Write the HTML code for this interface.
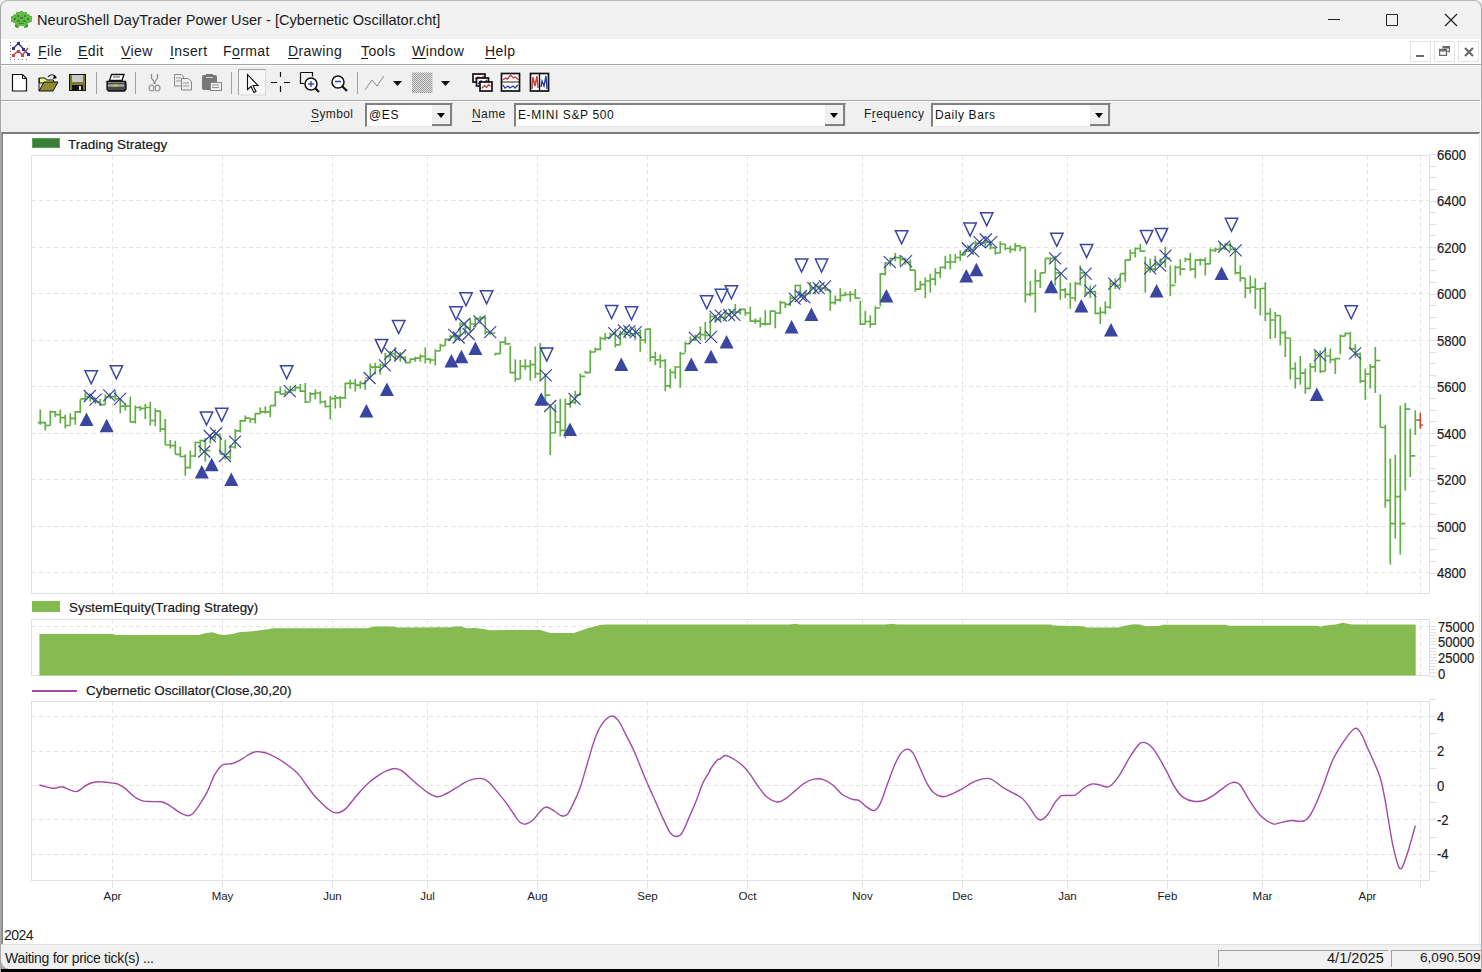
<!DOCTYPE html>
<html><head><meta charset="utf-8">
<style>
html,body{margin:0;padding:0;}
body{width:1482px;height:972px;overflow:hidden;position:relative;background:#fff;font-family:"Liberation Sans",sans-serif;color:#1a1a1a;}
.a{position:absolute;}
.t{position:absolute;white-space:pre;line-height:1;}
#title{left:0;top:0;width:1482px;height:39px;background:#f2f2f3;}
#menu{left:0;top:39px;width:1482px;height:25px;background:#fff;}
#tool{left:0;top:64px;width:1482px;height:37px;background:#f0f0f0;border-top:1px solid #a6a6a6;box-sizing:border-box;}
#sym{left:0;top:100px;width:1480px;height:34px;background:#f0f0f0;border-top:1px solid #a6a6a6;border-bottom:2px solid #7c7c7c;box-sizing:border-box;}
#status{left:0;top:945px;width:1482px;height:24px;background:#f0f0f0;}
#blk{left:0;top:969px;width:1482px;height:3px;background:#000;}
.mn{font-size:14px;top:44px;letter-spacing:0.4px;}
.mn u{text-decoration:none;background:linear-gradient(#1a1a1a,#1a1a1a) no-repeat 0 100%/100% 1px;}
.lbl{font-size:12px;top:108px;color:#222;}
.combo{position:absolute;top:103px;height:24px;background:#fff;box-sizing:border-box;border-top:2px solid #808080;border-left:2px solid #808080;border-right:1px solid #e8e8e8;border-bottom:1px solid #e8e8e8;}
.combo .btn{position:absolute;right:0;top:0;width:20px;height:21px;background:#f0f0f0;box-sizing:border-box;border-right:2px solid #808080;border-bottom:2px solid #808080;}
.combo .btn:after{content:"";position:absolute;left:5px;top:8px;border-left:4.5px solid transparent;border-right:4.5px solid transparent;border-top:5px solid #000;}
.combo .v{position:absolute;left:2px;top:3px;font-size:12px;color:#111;letter-spacing:0.6px;white-space:pre;}
.sep{position:absolute;top:72px;width:1px;height:22px;background:#a0a0a0;}
</style></head><body>
<div class="a" id="title"></div>
<div class="a" style="left:0;top:0;width:1482px;height:972px;box-sizing:border-box;border-left:1px solid #a8a8a8;border-right:1px solid #a8a8a8;border-top:1px solid #b8b8b8;border-top-left-radius:8px;border-top-right-radius:8px;pointer-events:none;z-index:5"></div>
<!-- app icon -->
<svg class="a" style="left:11px;top:11px" width="21" height="17" viewBox="0 0 21 17">
<path d="M9 0h3v1h4v2h2v1h1v1h2v6h-2v1h-2v2h-1v4h-3v-3h-5v3h-3v-4h-1v-2h-2v-1h-2v-6h2v-1h1v-1h2v-2h4z" fill="#64b845"/>
<path d="M6 4h2v2h-2zM13 4h2v2h-2zM3 7h2v2h-2zM9 6h3v2h-3zM16 7h2v2h-2zM6 9h3v2h-3zM12 9h3v2h-3zM8 12h5v1h-5zM4 14h2v2h-2zM15 14h2v2h-2z" fill="#3e8a2e"/>
</svg>
<div class="t" style="left:37px;top:13px;font-size:14.6px;color:#1a1a1a">NeuroShell DayTrader Power User - [Cybernetic Oscillator.cht]</div>
<!-- window buttons -->
<div class="a" style="left:1328px;top:19px;width:12px;height:1px;background:#222"></div>
<div class="a" style="left:1386px;top:14px;width:10px;height:10px;border:1px solid #222;border-radius:1px"></div>
<svg class="a" style="left:1444px;top:13px" width="14" height="14"><path d="M1 1L13 13M13 1L1 13" stroke="#222" stroke-width="1.2"/></svg>

<div class="a" id="menu"></div>
<!-- menu chart icon -->
<svg class="a" style="left:9px;top:40px" width="22" height="21" viewBox="0 0 22 21">
<g fill="#777"><rect x="1" y="2" width="1" height="1"/><rect x="1" y="5" width="1" height="1"/><rect x="1" y="8" width="1" height="1"/><rect x="1" y="11" width="1" height="1"/><rect x="1" y="14" width="1" height="1"/><rect x="1" y="17" width="1" height="1"/><rect x="1" y="19" width="1" height="1"/><rect x="5" y="19" width="1" height="1"/><rect x="9" y="19" width="1" height="1"/><rect x="13" y="19" width="1" height="1"/><rect x="17" y="19" width="1" height="1"/></g>
<g fill="#ccc"><rect x="5" y="1" width="1" height="1"/><rect x="9" y="1" width="1" height="1"/><rect x="13" y="1" width="1" height="1"/><rect x="17" y="1" width="1" height="1"/><rect x="20" y="5" width="1" height="1"/><rect x="20" y="9" width="1" height="1"/><rect x="20" y="13" width="1" height="1"/></g>
<path d="M4.5 8L9.5 3.5L14.5 9L19.5 14.5" stroke="#2a3490" stroke-width="1.5" fill="none"/>
<g fill="#2a3490"><rect x="3" y="7" width="3" height="3"/><rect x="8" y="2" width="3" height="3"/><rect x="13" y="8" width="3" height="3"/><rect x="18" y="13" width="3" height="3"/></g>
<path d="M4.5 15L9 11L13.5 15L19 8" stroke="#d04545" stroke-width="1.5" fill="none"/>
<g fill="#d04545"><rect x="3" y="14" width="3" height="3"/><rect x="8" y="10" width="3" height="3"/><rect x="12" y="14" width="3" height="3"/></g>
</svg>
<div class="t mn" style="left:38px"><u>F</u>ile</div>
<div class="t mn" style="left:78px"><u>E</u>dit</div>
<div class="t mn" style="left:121px"><u>V</u>iew</div>
<div class="t mn" style="left:170px"><u>I</u>nsert</div>
<div class="t mn" style="left:223px">F<u>o</u>rmat</div>
<div class="t mn" style="left:288px"><u>D</u>rawing</div>
<div class="t mn" style="left:361px"><u>T</u>ools</div>
<div class="t mn" style="left:412px"><u>W</u>indow</div>
<div class="t mn" style="left:485px"><u>H</u>elp</div>
<!-- MDI buttons -->
<div class="a" style="left:1410px;top:41px;width:21px;height:21px;box-sizing:border-box;border:1px solid #e4e4e4;background:#fff"></div>
<div class="a" style="left:1416px;top:55px;width:8px;height:2px;background:#6a6a6a"></div>
<div class="a" style="left:1434px;top:41px;width:21px;height:21px;box-sizing:border-box;border:1px solid #e4e4e4;background:#fff"></div>
<svg class="a" style="left:1439px;top:46px" width="11" height="10"><path d="M3.5 0.5h7v5h-2M0.5 3.5h7v6h-7z" stroke="#6a6a6a" fill="none" stroke-width="1.3"/><rect x="0.5" y="3.5" width="7" height="2" fill="#6a6a6a"/><rect x="3.5" y="0.5" width="7" height="2" fill="#6a6a6a"/></svg>
<div class="a" style="left:1458px;top:41px;width:21px;height:21px;box-sizing:border-box;border:1px solid #e4e4e4;background:#fff"></div>
<svg class="a" style="left:1464px;top:47px" width="10" height="10"><path d="M1 1L9 9M9 1L1 9" stroke="#6a6a6a" stroke-width="2.2"/></svg>

<div class="a" id="tool"><div style="position:absolute;left:0;top:0;width:100%;height:1px;background:#fff"></div></div>
<!-- toolbar icons -->
<svg class="a" style="left:0;top:64px" width="560" height="37" viewBox="0 64 560 37">
<!-- new -->
<path d="M12.5 74.5h10l4 4v12.5h-14z" fill="#fff" stroke="#111" stroke-width="1.2"/>
<path d="M22.5 74.5v4h4" fill="none" stroke="#111" stroke-width="1"/>
<!-- open -->
<path d="M39 78h6l1.5 2h7v3h-14z" fill="#f2f08a" stroke="#111" stroke-width="1"/>
<path d="M39 91l5-9h14l-5 9z" fill="#8c8c30" stroke="#111" stroke-width="1"/>
<path d="M39 78v13" stroke="#111"/>
<path d="M48 77c2-3 6-3 8 0" stroke="#111" stroke-width="1.2" fill="none"/><path d="M54 75l3 3-4 1z" fill="#111"/>
<!-- save -->
<rect x="69.5" y="74.5" width="16" height="16" fill="#7c7c28" stroke="#111"/>
<rect x="72" y="75" width="11" height="7" fill="#c8c8c8"/>
<rect x="72" y="85" width="11" height="6" fill="#111"/><rect x="79" y="86" width="2" height="4" fill="#ddd"/>
<!-- sep -->
<rect x="96" y="72" width="1" height="22" fill="#a0a0a0"/>
<!-- printer -->
<path d="M111.5 74.5h12.5l-2 6h-12.5z" fill="#fff" stroke="#111" stroke-width="1.3"/>
<path d="M113 77h7" stroke="#666" stroke-width="1.2"/>
<path d="M107 81.5h18.5l0.5 2v5.5l-1.5 2h-16l-1.5-2v-5.5z" fill="#4a4a4a" stroke="#111" stroke-width="1.3"/>
<rect x="108" y="84.5" width="16" height="2" fill="#b8b8b8"/><rect x="113" y="84.5" width="5" height="2" fill="#b8d040"/>
<path d="M108 82.5h16" stroke="#888"/>
<rect x="135" y="72" width="1" height="22" fill="#a0a0a0"/>
<!-- cut -->
<path d="M151.5 74v4l4 6M157.5 74v4l-4 6" stroke="#8a8a8a" stroke-width="1.2" fill="none"/>
<ellipse cx="151.5" cy="88" rx="2.4" ry="2.9" fill="none" stroke="#999" stroke-width="1.3"/><ellipse cx="157.5" cy="88" rx="2.4" ry="2.9" fill="none" stroke="#999" stroke-width="1.3"/>
<!-- copy -->
<path d="M174.5 74.5h7l2 2v9.5h-9z" fill="#eee" stroke="#888"/>
<path d="M181.5 78.5h7l3 3v8.5h-10z" fill="#eee" stroke="#888"/>
<path d="M176 78h5M176 81h5M183 83h6M183 86h6" stroke="#999"/>
<!-- paste -->
<rect x="202" y="75" width="15" height="15" rx="2" fill="#777"/>
<rect x="206" y="74" width="7" height="3" fill="#777"/><rect x="206" y="77" width="7" height="1" fill="#ccc"/>
<rect x="210.5" y="82.5" width="11" height="8" fill="#eee" stroke="#888"/>
<path d="M212 85h7M212 87.5h7" stroke="#999"/>
<rect x="231" y="72" width="1" height="22" fill="#a0a0a0"/>
<!-- pressed pointer button -->
<rect x="238.5" y="69.5" width="27" height="25.5" fill="#f7f7f7" stroke="#d8d8d8"/>
<path d="M238.5 95V69.5H266" stroke="#a0a0a0" fill="none"/>
<path d="M247.5 74.5v15l3.5-3 3 6 2-1-3-6h5z" fill="#fff" stroke="#111" stroke-width="1.1"/>
<!-- crosshair -->
<path d="M280.5 72v5M280.5 86v6M271 82.5h6M284 82.5h6" stroke="#111" stroke-width="1.2"/>
<!-- zoom in -->
<path d="M300.5 72.5h12v4M300.5 72.5v11h4" fill="none" stroke="#111" stroke-width="1.2"/>
<circle cx="311" cy="84" r="6" fill="#fff" stroke="#111" stroke-width="1.5"/>
<path d="M308 84h6M311 81v6" stroke="#3a46b0" stroke-width="1.4"/>
<path d="M315 88l4 4" stroke="#111" stroke-width="2.2"/>
<!-- zoom out -->
<circle cx="338" cy="82" r="6" fill="#fff" stroke="#111" stroke-width="1.5"/>
<path d="M335 81.5h6" stroke="#3a46b0" stroke-width="1.6"/>
<path d="M342 86l5 5" stroke="#111" stroke-width="2.2"/>
<rect x="357" y="72" width="1" height="22" fill="#a0a0a0"/>
<!-- line tool -->
<path d="M365 90l7-10 5 6 7-10" stroke="#8a8a8a" stroke-width="1" fill="none"/>
<path d="M393 81h9l-4.5 5z" fill="#111"/>
<defs><pattern id="chk" width="2" height="2" patternUnits="userSpaceOnUse" x="0" y="0"><rect width="2" height="2" fill="#e2e2e2"/><rect width="1" height="1" fill="#9a9a9a"/><rect x="1" y="1" width="1" height="1" fill="#9a9a9a"/></pattern></defs><rect x="412" y="72.5" width="20.5" height="20.5" fill="url(#chk)"/>
<path d="M441 81h9l-4.5 5z" fill="#111"/>
<!-- cascade -->
<rect x="473" y="74" width="12" height="8" fill="#fff" stroke="#111" stroke-width="1.7"/>
<path d="M475 79l3-2 3 1 3-2" stroke="#c84040" fill="none" stroke-width="1.2"/>
<rect x="476.5" y="78" width="12" height="8" fill="#fff" stroke="#111" stroke-width="1.7"/>
<path d="M478 84l3-3 3 2 3-3" stroke="#2a3aa0" fill="none" stroke-width="1.4"/>
<rect x="480" y="82" width="12" height="9" fill="#fff" stroke="#111" stroke-width="1.7"/>
<path d="M481.5 88.5l3-3 2 2 2-3 2 2" stroke="#c84040" fill="none" stroke-width="1.3"/>
<!-- tile h -->
<rect x="501.5" y="73.5" width="18" height="17.5" fill="#fff" stroke="#111" stroke-width="1.7"/>
<path d="M502 82h17" stroke="#444" stroke-width="1.2"/>
<path d="M502.5 80l3-2 2 1 3-4 3 3 2-1 3 3" stroke="#c84040" fill="none" stroke-width="1.4"/>
<path d="M503 85l2 3 3-2 2 2 3-2 2 2 3-3" stroke="#2a3aa0" fill="none" stroke-width="1.3"/>
<!-- tile v -->
<rect x="530.5" y="73.5" width="18" height="17.5" fill="#fff" stroke="#111" stroke-width="1.7"/>
<path d="M539.5 74v17" stroke="#111" stroke-width="1.4"/>
<path d="M532 89l1-12 2 9 2-10 1 12" stroke="#c84040" fill="none" stroke-width="1.4"/>
<path d="M541 87l1-6 2 5 2-10 1 13" stroke="#2a3aa0" fill="none" stroke-width="1.4"/>
</svg>

<div class="a" id="sym"><div style="position:absolute;left:0;top:0;width:100%;height:1px;background:#fff"></div></div>
<div class="t lbl" style="left:311px;letter-spacing:0.4px"><u style="text-decoration:none;border-bottom:1px solid #222">S</u>ymbol</div>
<div class="combo" style="left:365px;width:88px"><div class="v">@ES</div><div class="btn"></div></div>
<div class="t lbl" style="left:472px;letter-spacing:0.4px"><u style="text-decoration:none;border-bottom:1px solid #222">N</u>ame</div>
<div class="combo" style="left:514px;width:332px"><div class="v">E-MINI S&amp;P 500</div><div class="btn"></div></div>
<div class="t lbl" style="left:864px;letter-spacing:0.4px">F<u style="text-decoration:none;border-bottom:1px solid #222">r</u>equency</div>
<div class="combo" style="left:931px;width:180px"><div class="v">Daily Bars</div><div class="btn"></div></div>

<!-- chart area borders -->
<div class="a" style="left:2px;top:133px;width:1px;height:812px;background:#808080"></div>
<div class="a" style="left:1px;top:133px;width:1px;height:812px;background:#9c9c9c"></div>
<div class="a" style="left:1479px;top:133px;width:1px;height:812px;background:#ececec"></div>
<!-- legends -->
<div class="a" style="left:32px;top:138px;width:28px;height:10px;box-sizing:border-box;border:1px solid #52a848;background:#3d7d3b"></div>
<div class="t" style="left:68px;top:138px;font-size:13.5px;-webkit-text-stroke:0.2px #1a1a1a">Trading Strategy</div>
<div class="a" style="left:32px;top:601px;width:28px;height:11px;background:#84bb50"></div>
<div class="t" style="left:69px;top:601px;font-size:13.4px;-webkit-text-stroke:0.2px #1a1a1a">SystemEquity(Trading Strategy)</div>
<div class="a" style="left:32px;top:690px;width:45px;height:2px;background:#a04aa6"></div>
<div class="t" style="left:86px;top:684px;font-size:13.5px;-webkit-text-stroke:0.2px #1a1a1a">Cybernetic Oscillator(Close,30,20)</div>
<div class="t" style="left:4px;top:928px;font-size:14px;letter-spacing:-0.5px">2024</div>

<svg class="a" style="left:0;top:0" width="1482" height="972" font-family="Liberation Sans, sans-serif">
<rect x="31.5" y="155.5" width="1398.0" height="438.0" fill="none" stroke="#e0e0e0" stroke-width="1"/>
<line x1="31.5" y1="200.5" x2="1429.5" y2="200.5" stroke="#e3e3e3" stroke-dasharray="4 3.5"/>
<line x1="31.5" y1="247.5" x2="1429.5" y2="247.5" stroke="#e3e3e3" stroke-dasharray="4 3.5"/>
<line x1="31.5" y1="293.5" x2="1429.5" y2="293.5" stroke="#e3e3e3" stroke-dasharray="4 3.5"/>
<line x1="31.5" y1="340.5" x2="1429.5" y2="340.5" stroke="#e3e3e3" stroke-dasharray="4 3.5"/>
<line x1="31.5" y1="386.5" x2="1429.5" y2="386.5" stroke="#e3e3e3" stroke-dasharray="4 3.5"/>
<line x1="31.5" y1="433.5" x2="1429.5" y2="433.5" stroke="#e3e3e3" stroke-dasharray="4 3.5"/>
<line x1="31.5" y1="479.5" x2="1429.5" y2="479.5" stroke="#e3e3e3" stroke-dasharray="4 3.5"/>
<line x1="31.5" y1="526.5" x2="1429.5" y2="526.5" stroke="#e3e3e3" stroke-dasharray="4 3.5"/>
<line x1="31.5" y1="572.5" x2="1429.5" y2="572.5" stroke="#e3e3e3" stroke-dasharray="4 3.5"/>
<line x1="112.5" y1="155.5" x2="112.5" y2="593.5" stroke="#e3e3e3" stroke-dasharray="4 3.5"/>
<line x1="222.5" y1="155.5" x2="222.5" y2="593.5" stroke="#e3e3e3" stroke-dasharray="4 3.5"/>
<line x1="332.5" y1="155.5" x2="332.5" y2="593.5" stroke="#e3e3e3" stroke-dasharray="4 3.5"/>
<line x1="427.5" y1="155.5" x2="427.5" y2="593.5" stroke="#e3e3e3" stroke-dasharray="4 3.5"/>
<line x1="537.5" y1="155.5" x2="537.5" y2="593.5" stroke="#e3e3e3" stroke-dasharray="4 3.5"/>
<line x1="647.5" y1="155.5" x2="647.5" y2="593.5" stroke="#e3e3e3" stroke-dasharray="4 3.5"/>
<line x1="747.5" y1="155.5" x2="747.5" y2="593.5" stroke="#e3e3e3" stroke-dasharray="4 3.5"/>
<line x1="862.5" y1="155.5" x2="862.5" y2="593.5" stroke="#e3e3e3" stroke-dasharray="4 3.5"/>
<line x1="962.5" y1="155.5" x2="962.5" y2="593.5" stroke="#e3e3e3" stroke-dasharray="4 3.5"/>
<line x1="1067.5" y1="155.5" x2="1067.5" y2="593.5" stroke="#e3e3e3" stroke-dasharray="4 3.5"/>
<line x1="1167.5" y1="155.5" x2="1167.5" y2="593.5" stroke="#e3e3e3" stroke-dasharray="4 3.5"/>
<line x1="1262.5" y1="155.5" x2="1262.5" y2="593.5" stroke="#e3e3e3" stroke-dasharray="4 3.5"/>
<line x1="1367.5" y1="155.5" x2="1367.5" y2="593.5" stroke="#e3e3e3" stroke-dasharray="4 3.5"/>
<line x1="1420.5" y1="155.5" x2="1420.5" y2="593.5" stroke="#e3e3e3" stroke-dasharray="4 3.5"/>
<line x1="1429.5" y1="154.5" x2="1436.5" y2="154.5" stroke="#e0e0e0"/>
<line x1="1429.5" y1="166.5" x2="1436.5" y2="166.5" stroke="#e0e0e0"/>
<line x1="1429.5" y1="177.5" x2="1436.5" y2="177.5" stroke="#e0e0e0"/>
<line x1="1429.5" y1="189.5" x2="1436.5" y2="189.5" stroke="#e0e0e0"/>
<line x1="1429.5" y1="201.5" x2="1436.5" y2="201.5" stroke="#e0e0e0"/>
<line x1="1429.5" y1="212.5" x2="1436.5" y2="212.5" stroke="#e0e0e0"/>
<line x1="1429.5" y1="224.5" x2="1436.5" y2="224.5" stroke="#e0e0e0"/>
<line x1="1429.5" y1="235.5" x2="1436.5" y2="235.5" stroke="#e0e0e0"/>
<line x1="1429.5" y1="247.5" x2="1436.5" y2="247.5" stroke="#e0e0e0"/>
<line x1="1429.5" y1="259.5" x2="1436.5" y2="259.5" stroke="#e0e0e0"/>
<line x1="1429.5" y1="270.5" x2="1436.5" y2="270.5" stroke="#e0e0e0"/>
<line x1="1429.5" y1="282.5" x2="1436.5" y2="282.5" stroke="#e0e0e0"/>
<line x1="1429.5" y1="294.5" x2="1436.5" y2="294.5" stroke="#e0e0e0"/>
<line x1="1429.5" y1="305.5" x2="1436.5" y2="305.5" stroke="#e0e0e0"/>
<line x1="1429.5" y1="317.5" x2="1436.5" y2="317.5" stroke="#e0e0e0"/>
<line x1="1429.5" y1="328.5" x2="1436.5" y2="328.5" stroke="#e0e0e0"/>
<line x1="1429.5" y1="340.5" x2="1436.5" y2="340.5" stroke="#e0e0e0"/>
<line x1="1429.5" y1="352.5" x2="1436.5" y2="352.5" stroke="#e0e0e0"/>
<line x1="1429.5" y1="363.5" x2="1436.5" y2="363.5" stroke="#e0e0e0"/>
<line x1="1429.5" y1="375.5" x2="1436.5" y2="375.5" stroke="#e0e0e0"/>
<line x1="1429.5" y1="387.5" x2="1436.5" y2="387.5" stroke="#e0e0e0"/>
<line x1="1429.5" y1="398.5" x2="1436.5" y2="398.5" stroke="#e0e0e0"/>
<line x1="1429.5" y1="410.5" x2="1436.5" y2="410.5" stroke="#e0e0e0"/>
<line x1="1429.5" y1="421.5" x2="1436.5" y2="421.5" stroke="#e0e0e0"/>
<line x1="1429.5" y1="433.5" x2="1436.5" y2="433.5" stroke="#e0e0e0"/>
<line x1="1429.5" y1="445.5" x2="1436.5" y2="445.5" stroke="#e0e0e0"/>
<line x1="1429.5" y1="456.5" x2="1436.5" y2="456.5" stroke="#e0e0e0"/>
<line x1="1429.5" y1="468.5" x2="1436.5" y2="468.5" stroke="#e0e0e0"/>
<line x1="1429.5" y1="480.5" x2="1436.5" y2="480.5" stroke="#e0e0e0"/>
<line x1="1429.5" y1="491.5" x2="1436.5" y2="491.5" stroke="#e0e0e0"/>
<line x1="1429.5" y1="503.5" x2="1436.5" y2="503.5" stroke="#e0e0e0"/>
<line x1="1429.5" y1="514.5" x2="1436.5" y2="514.5" stroke="#e0e0e0"/>
<line x1="1429.5" y1="526.5" x2="1436.5" y2="526.5" stroke="#e0e0e0"/>
<line x1="1429.5" y1="538.5" x2="1436.5" y2="538.5" stroke="#e0e0e0"/>
<line x1="1429.5" y1="549.5" x2="1436.5" y2="549.5" stroke="#e0e0e0"/>
<line x1="1429.5" y1="561.5" x2="1436.5" y2="561.5" stroke="#e0e0e0"/>
<line x1="1429.5" y1="573.5" x2="1436.5" y2="573.5" stroke="#e0e0e0"/>
<path d="M40.3 409.7V424.8M37.8 422.7H40.3M40.3 422.7H42.8M45.3 421.9V430.6M42.8 422.7H45.3M45.3 425.5H47.8M50.3 410.4V425.5M47.8 425.5H50.3M50.3 411.9H52.8M55.3 411.1V416.9M52.8 411.9H55.3M55.3 414.7H57.8M60.3 409.7V423.4M57.8 414.7H60.3M60.3 417.6H62.8M65.3 414.7V428.4M62.8 417.6H65.3M65.3 425.5H67.8M70.3 413.3V424.8M67.8 425.5H70.3M70.3 418.3H72.8M75.3 411.1V424.8M72.8 418.3H75.3M75.3 411.9H77.8M80.3 399.6V413.3M77.8 411.9H80.3M80.3 398.9H82.8M85.3 392.4V400.3M82.8 398.9H85.3M85.3 396.7H87.8M90.3 394.6V401.8M87.8 396.7H90.3M90.3 398.2H92.8M95.3 398.2V403.9M92.8 398.2H95.3M95.3 401.8H97.8M100.3 398.9V406.1M97.8 401.8H100.3M100.3 404.6H102.8M105.3 394.6V404.6M102.8 404.6H105.3M105.3 396.7H107.8M110.3 393.1V398.9M107.8 396.7H110.3M110.3 396.7H112.8M115.3 390.2V399.6M112.8 396.7H115.3M115.3 398.9H117.8M120.3 398.2V413.3M117.8 398.9H120.3M120.3 406.1H122.8M125.3 403.2V410.4M122.8 406.1H125.3M125.3 406.1H127.8M130.3 396.7V422.7M127.8 406.1H130.3M130.3 421.9H132.8M135.3 405.4V423.4M132.8 421.9H135.3M135.3 407.5H137.8M140.3 406.1V411.1M137.8 407.5H140.3M140.3 408.3H142.8M145.3 403.9V419.1M142.8 408.3H145.3M145.3 407.5H147.8M150.3 401.8V425.5M147.8 407.5H150.3M150.3 420.5H152.8M155.3 408.3V426.3M152.8 420.5H155.3M155.3 411.1H157.8M160.3 410.4V432.0M157.8 411.1H160.3M160.3 429.1H162.8M165.3 419.1V445.0M162.8 429.1H165.3M165.3 445.0H167.8M170.3 439.9V448.6M167.8 445.0H170.3M170.3 445.7H172.8M175.3 440.7V454.3M172.8 445.7H175.3M175.3 454.3H177.8M180.3 446.4V457.2M177.8 454.3H180.3M180.3 456.5H182.8M185.3 454.2V475.8M182.8 456.5H185.3M185.3 467.7H187.8M190.3 450.6V468.6M187.8 467.7H190.3M190.3 456.0H192.8M195.3 441.6V456.9M192.8 456.0H195.3M195.3 442.5H197.8M200.3 439.8V452.4M197.8 442.5H200.3M200.3 440.7H202.8M205.3 438.0V461.4M202.8 440.7H205.3M205.3 450.6H207.8M210.3 434.4V443.4M207.8 450.6H210.3M210.3 437.1H212.8M215.3 432.6V439.8M212.8 437.1H215.3M215.3 434.4H217.8M220.3 434.4V454.2M217.8 434.4H220.3M220.3 454.2H222.8M225.3 439.8V459.6M222.8 454.2H225.3M225.3 456.9H227.8M230.3 445.2V459.6M227.8 456.9H230.3M230.3 447.0H232.8M235.3 429.0V448.8M232.8 447.0H235.3M235.3 430.8H237.8M240.3 420.0V432.6M237.8 430.8H240.3M240.3 420.9H242.8M245.3 415.5V421.8M242.8 420.9H245.3M245.3 418.2H247.8M250.3 418.2V422.7M247.8 418.2H250.3M250.3 419.1H252.8M255.3 412.8V423.6M252.8 419.1H255.3M255.3 413.7H257.8M260.3 407.4V413.7M257.8 413.7H260.3M260.3 411.9H262.8M265.3 406.5V413.7M262.8 411.9H265.3M265.3 411.9H267.8M270.3 405.6V417.3M267.8 411.9H270.3M270.3 405.6H272.8M275.3 391.2V406.5M272.8 405.6H275.3M275.3 392.1H277.8M280.3 386.7V394.8M277.8 392.1H280.3M280.3 393.9H282.8M285.3 389.4V395.7M282.8 393.9H285.3M285.3 392.1H287.8M290.3 385.8V393.0M287.8 392.1H290.3M290.3 390.3H292.8M295.3 385.8V391.2M292.8 390.3H295.3M295.3 387.6H297.8M300.3 384.0V392.1M297.8 387.6H300.3M300.3 391.2H302.8M305.3 383.1V402.9M302.8 391.2H305.3M305.3 402.0H307.8M310.3 392.1V401.1M307.8 402.0H310.3M310.3 393.9H312.8M315.3 389.4V399.3M312.8 393.9H315.3M315.3 393.0H317.8M320.3 391.2V403.8M317.8 393.0H320.3M320.3 402.0H322.8M325.3 400.2V407.4M322.8 402.0H325.3M325.3 406.5H327.8M330.3 396.0V419.4M327.8 406.5H330.3M330.3 398.7H332.8M335.3 395.1V408.6M332.8 398.7H335.3M335.3 397.8H337.8M340.3 396.0V407.7M337.8 397.8H340.3M340.3 397.8H342.8M345.3 382.5V398.7M342.8 397.8H345.3M345.3 383.4H347.8M350.3 379.8V388.8M347.8 383.4H350.3M350.3 383.4H352.8M355.3 378.9V391.5M352.8 383.4H355.3M355.3 385.2H357.8M360.3 380.7V388.8M357.8 385.2H360.3M360.3 383.4H362.8M365.3 379.8V389.7M362.8 383.4H365.3M365.3 378.0H367.8M370.3 363.6V378.0M367.8 378.0H370.3M370.3 367.2H372.8M375.3 362.7V374.4M372.8 367.2H375.3M375.3 367.2H377.8M380.3 363.6V374.4M377.8 367.2H380.3M380.3 365.4H382.8M385.3 352.8V367.2M382.8 365.4H385.3M385.3 356.4H387.8M390.3 351.0V360.0M387.8 356.4H390.3M390.3 353.7H392.8M395.3 347.4V360.0M392.8 353.7H395.3M395.3 356.4H397.8M400.3 351.9V361.8M397.8 356.4H400.3M400.3 357.3H402.8M405.3 356.4V362.7M402.8 357.3H405.3M405.3 362.7H407.8M410.3 358.2V362.7M407.8 362.7H410.3M410.3 359.1H412.8M415.3 356.4V361.8M412.8 359.1H415.3M415.3 358.2H417.8M420.3 354.6V361.8M417.8 358.2H420.3M420.3 356.4H422.8M425.3 347.4V363.6M422.8 356.4H425.3M425.3 359.1H427.8M430.3 358.2V363.6M427.8 359.1H430.3M430.3 360.0H432.8M435.3 349.2V365.4M432.8 360.0H435.3M435.3 351.0H437.8M440.3 343.8V351.0M437.8 351.0H440.3M440.3 345.6H442.8M445.3 338.4V345.6M442.8 345.6H445.3M445.3 339.3H447.8M450.3 334.8V341.1M447.8 339.3H450.3M450.3 336.6H452.8M455.3 333.9V341.1M452.8 336.6H455.3M455.3 335.7H457.8M460.3 322.2V336.6M457.8 335.7H460.3M460.3 324.0H462.8M465.3 322.2V334.8M462.8 324.0H465.3M465.3 327.6H467.8M470.3 318.6V332.1M467.8 327.6H470.3M470.3 324.0H472.8M475.3 316.8V327.6M472.8 324.0H475.3M475.3 318.6H477.8M480.3 315.9V324.0M477.8 318.6H480.3M480.3 317.7H482.8M485.3 316.8V334.8M482.8 317.7H485.3M485.3 332.1H487.8M490.3 331.2V334.8M487.8 332.1H490.3M490.3 333.0H492.8M495.3 352.8V355.5M492.8 333.0H495.3M495.3 353.7H497.8M500.3 341.2V353.8M497.8 353.7H500.3M500.3 342.1H502.8M505.3 336.7V344.8M502.8 342.1H505.3M505.3 343.9H507.8M510.3 345.7V373.6M507.8 343.9H510.3M510.3 372.7H512.8M515.3 359.2V381.7M512.8 372.7H515.3M515.3 379.0H517.8M520.3 360.1V379.0M517.8 379.0H520.3M520.3 366.4H522.8M525.3 359.2V370.0M522.8 366.4H525.3M525.3 366.4H527.8M530.3 360.1V380.8M527.8 366.4H530.3M530.3 364.6H532.8M535.3 346.6V378.1M532.8 364.6H535.3M535.3 373.6H537.8M540.3 343.0V380.8M537.8 373.6H540.3M540.3 348.4H542.8M545.3 373.6V404.2M542.8 348.4H545.3M545.3 395.2H547.8M550.3 404.2V455.0M547.8 395.2H550.3M550.3 433.0H552.8M555.3 404.2V433.0M552.8 433.0H555.3M555.3 422.2H557.8M560.3 398.8V436.6M557.8 422.2H560.3M560.3 430.3H562.8M565.3 398.8V438.4M562.8 430.3H565.3M565.3 404.2H567.8M570.3 395.2V407.8M567.8 404.2H570.3M570.3 402.4H572.8M575.3 390.7V404.2M572.8 402.4H575.3M575.3 395.2H577.8M580.3 373.6V395.2M577.8 395.2H580.3M580.3 376.3H582.8M585.3 370.9V373.6M582.8 376.3H585.3M585.3 372.7H587.8M590.3 350.2V372.7M587.8 372.7H590.3M590.3 352.0H592.8M595.3 347.5V352.0M592.8 352.0H595.3M595.3 349.3H597.8M600.3 336.7V350.2M597.8 349.3H600.3M600.3 338.5H602.8M605.3 333.1V340.3M602.8 338.5H605.3M605.3 337.6H607.8M610.3 333.1V338.5M607.8 337.6H610.3M610.3 334.0H612.8M615.3 328.6V347.5M612.8 334.0H615.3M615.3 344.8H617.8M620.3 330.4V344.8M617.8 344.8H620.3M620.3 334.0H622.8M625.3 325.9V338.5M622.8 334.0H625.3M625.3 332.2H627.8M630.3 327.7V335.8M627.8 332.2H630.3M630.3 334.0H632.8M635.3 327.4V340.0M632.8 334.0H635.3M635.3 332.8H637.8M640.3 329.2V351.7M637.8 332.8H640.3M640.3 340.0H642.8M645.3 329.2V343.6M642.8 340.0H645.3M645.3 329.2H647.8M650.3 328.3V361.6M647.8 329.2H650.3M650.3 357.1H652.8M655.3 351.7V365.2M652.8 357.1H655.3M655.3 359.8H657.8M660.3 354.4V367.9M657.8 359.8H660.3M660.3 360.7H662.8M665.3 358.9V391.3M662.8 360.7H665.3M665.3 385.9H667.8M670.3 368.8V388.6M667.8 385.9H670.3M670.3 372.4H672.8M675.3 366.1V378.7M672.8 372.4H675.3M675.3 367.0H677.8M680.3 351.7V387.7M677.8 367.0H680.3M680.3 353.5H682.8M685.3 341.8V352.6M682.8 353.5H685.3M685.3 343.6H687.8M690.3 336.4V341.8M687.8 343.6H690.3M690.3 340.0H692.8M695.3 334.6V340.9M692.8 340.0H695.3M695.3 337.3H697.8M700.3 326.5V340.0M697.8 337.3H700.3M700.3 334.6H702.8M705.3 322.0V340.0M702.8 334.6H705.3M705.3 335.5H707.8M710.3 313.0V338.2M707.8 335.5H710.3M710.3 316.6H712.8M715.3 314.8V322.9M712.8 316.6H715.3M715.3 319.3H717.8M720.3 314.8V321.1M717.8 319.3H720.3M720.3 317.5H722.8M725.3 311.2V318.4M722.8 317.5H725.3M725.3 313.9H727.8M730.3 309.4V317.5M727.8 313.9H730.3M730.3 312.1H732.8M735.3 304.0V314.8M732.8 312.1H735.3M735.3 312.1H737.8M740.3 308.5V314.8M737.8 312.1H740.3M740.3 309.4H742.8M745.3 308.5V315.7M742.8 309.4H745.3M745.3 313.0H747.8M750.3 306.7V322.0M747.8 313.0H750.3M750.3 321.1H752.8M755.3 318.4V323.8M752.8 321.1H755.3M755.3 321.1H757.8M760.3 317.5V327.4M757.8 321.1H760.3M760.3 323.8H762.8M765.3 310.3V325.6M762.8 323.8H765.3M765.3 323.8H767.8M770.3 310.3V324.7M767.8 323.8H770.3M770.3 311.2H772.8M775.3 311.2V328.3M772.8 311.2H775.3M775.3 313.0H777.8M780.3 300.8V314.3M777.8 313.0H780.3M780.3 302.6H782.8M785.3 302.6V308.0M782.8 302.6H785.3M785.3 304.4H787.8M790.3 295.4V306.2M787.8 304.4H790.3M790.3 298.1H792.8M795.3 284.6V298.1M792.8 298.1H795.3M795.3 285.5H797.8M800.3 284.6V298.1M797.8 285.5H800.3M800.3 295.4H802.8M805.3 290.9V298.1M802.8 295.4H805.3M805.3 293.6H807.8M810.3 281.9V294.5M807.8 293.6H810.3M810.3 288.2H812.8M815.3 283.7V294.5M812.8 288.2H815.3M815.3 286.4H817.8M820.3 284.6V291.8M817.8 286.4H820.3M820.3 288.2H822.8M825.3 286.4V290.9M822.8 288.2H825.3M825.3 290.0H827.8M830.3 290.0V310.7M827.8 290.0H830.3M830.3 302.6H832.8M835.3 295.4V304.4M832.8 302.6H835.3M835.3 299.9H837.8M840.3 288.2V301.7M837.8 299.9H840.3M840.3 295.4H842.8M845.3 291.8V296.3M842.8 295.4H845.3M845.3 294.5H847.8M850.3 290.9V301.7M847.8 294.5H850.3M850.3 294.5H852.8M855.3 289.1V299.0M852.8 294.5H855.3M855.3 298.1H857.8M860.3 300.8V325.1M857.8 298.1H860.3M860.3 324.2H862.8M865.3 310.7V324.2M862.8 324.2H865.3M865.3 321.5H867.8M870.3 315.2V327.8M867.8 321.5H870.3M870.3 324.2H872.8M875.3 306.2V325.1M872.8 324.2H875.3M875.3 308.0H877.8M880.3 272.9V306.2M877.8 308.0H880.3M880.3 273.8H882.8M885.3 262.1V275.6M882.8 273.8H885.3M885.3 263.0H887.8M890.3 257.6V266.6M887.8 263.0H890.3M890.3 258.5H892.8M895.3 253.1V261.2M892.8 258.5H895.3M895.3 257.6H897.8M900.3 254.9V265.7M897.8 257.6H900.3M900.3 259.4H902.8M905.3 257.6V264.8M902.8 259.4H905.3M905.3 262.1H907.8M910.3 259.4V271.1M907.8 262.1H910.3M910.3 270.2H912.8M915.3 270.2V291.8M912.8 270.2H915.3M915.3 289.1H917.8M920.3 281.0V290.0M917.8 289.1H920.3M920.3 284.6H922.8M925.3 277.4V298.1M922.8 284.6H925.3M925.3 281.0H927.8M930.3 273.7V292.6M927.8 281.0H930.3M930.3 279.1H932.8M935.3 268.3V285.4M932.8 279.1H935.3M935.3 272.8H937.8M940.3 266.5V278.2M937.8 272.8H940.3M940.3 267.4H942.8M945.3 255.7V269.2M942.8 267.4H945.3M945.3 262.0H947.8M950.3 253.9V269.2M947.8 262.0H950.3M950.3 262.0H952.8M955.3 253.9V262.9M952.8 262.0H955.3M955.3 257.5H957.8M960.3 250.3V261.1M957.8 257.5H960.3M960.3 254.8H962.8M965.3 249.4V254.8M962.8 254.8H965.3M965.3 251.2H967.8M970.3 245.8V252.1M967.8 251.2H970.3M970.3 249.4H972.8M975.3 240.4V249.4M972.8 249.4H975.3M975.3 243.1H977.8M980.3 240.4V245.8M977.8 243.1H980.3M980.3 243.1H982.8M985.3 238.6V246.7M982.8 243.1H985.3M985.3 242.2H987.8M990.3 242.2V249.4M987.8 242.2H990.3M990.3 247.6H992.8M995.3 247.6V254.8M992.8 247.6H995.3M995.3 253.0H997.8M1000.3 241.3V253.0M997.8 253.0H1000.3M1000.3 244.0H1002.8M1005.3 244.0V250.3M1002.8 244.0H1005.3M1005.3 248.5H1007.8M1010.3 245.8V253.0M1007.8 248.5H1010.3M1010.3 249.4H1012.8M1015.3 243.1V251.2M1012.8 249.4H1015.3M1015.3 245.8H1017.8M1020.3 245.8V251.2M1017.8 245.8H1020.3M1020.3 247.6H1022.8M1025.3 246.7V302.5M1022.8 247.6H1025.3M1025.3 294.4H1027.8M1030.3 280.9V296.2M1027.8 294.4H1030.3M1030.3 293.5H1032.8M1035.3 269.2V312.4M1032.8 293.5H1035.3M1035.3 280.9H1037.8M1040.3 272.8V288.1M1037.8 280.9H1040.3M1040.3 272.8H1042.8M1045.3 258.4V272.8M1042.8 272.8H1045.3M1045.3 258.4H1047.8M1050.3 257.5V263.8M1047.8 258.4H1050.3M1050.3 258.4H1052.8M1055.3 255.7V285.4M1052.8 258.4H1055.3M1055.3 272.8H1057.8M1060.3 272.8V299.8M1057.8 272.8H1060.3M1060.3 289.9H1062.8M1065.3 288.1V298.0M1062.8 289.9H1065.3M1065.3 294.4H1067.8M1070.3 282.7V308.8M1067.8 294.4H1070.3M1070.3 298.0H1072.8M1075.3 281.8V301.6M1072.8 298.0H1075.3M1075.3 283.6H1077.8M1080.3 265.6V285.4M1077.8 283.6H1080.3M1080.3 272.8H1082.8M1085.3 274.6V296.2M1082.8 272.8H1085.3M1085.3 292.6H1087.8M1090.3 285.4V298.0M1087.8 292.6H1090.3M1090.3 291.7H1092.8M1095.3 290.8V314.2M1092.8 291.7H1095.3M1095.3 313.3H1097.8M1100.3 307.0V324.1M1097.8 313.3H1100.3M1100.3 312.4H1102.8M1105.3 301.6V314.2M1102.8 312.4H1105.3M1105.3 307.0H1107.8M1110.3 280.0V308.8M1107.8 307.0H1110.3M1110.3 283.6H1112.8M1115.3 278.2V289.0M1112.8 283.6H1115.3M1115.3 285.4H1117.8M1120.3 273.7V288.1M1117.8 285.4H1120.3M1120.3 273.7H1122.8M1125.3 259.3V281.8M1122.8 273.7H1125.3M1125.3 260.2H1127.8M1130.3 249.4V260.2M1127.8 260.2H1130.3M1130.3 253.0H1132.8M1135.3 247.6V257.5M1132.8 253.0H1135.3M1135.3 248.5H1137.8M1140.3 244.0V252.1M1137.8 248.5H1140.3M1140.3 251.2H1142.8M1145.3 256.6V292.6M1142.8 251.2H1145.3M1145.3 268.3H1147.8M1150.3 258.4V272.8M1147.8 268.3H1150.3M1150.3 269.2H1152.8M1155.3 255.7V270.1M1152.8 269.2H1155.3M1155.3 264.7H1157.8M1160.3 258.4V265.6M1157.8 264.7H1160.3M1160.3 262.0H1162.8M1165.3 246.7V267.4M1162.8 262.0H1165.3M1165.3 258.4H1167.8M1170.3 265.6V296.2M1167.8 258.4H1170.3M1170.3 285.4H1172.8M1175.3 265.6V283.6M1172.8 285.4H1175.3M1175.3 267.4H1177.8M1180.3 259.3V275.5M1177.8 267.4H1180.3M1180.3 269.2H1182.8M1185.3 257.5V262.0M1182.8 269.2H1185.3M1185.3 259.3H1187.8M1190.3 253.0V271.0M1187.8 259.3H1190.3M1190.3 269.2H1192.8M1195.3 259.3V278.2M1192.8 269.2H1195.3M1195.3 260.2H1197.8M1200.3 258.4V265.6M1197.8 260.2H1200.3M1200.3 260.2H1202.8M1205.3 257.5V275.5M1202.8 260.2H1205.3M1205.3 263.8H1207.8M1210.3 248.5V263.8M1207.8 263.8H1210.3M1210.3 250.3H1212.8M1215.3 247.6V252.1M1212.8 250.3H1215.3M1215.3 249.4H1217.8M1220.3 242.2V250.3M1217.8 249.4H1220.3M1220.3 248.5H1222.8M1225.3 243.1V250.3M1222.8 248.5H1225.3M1225.3 244.9H1227.8M1230.3 242.2V251.2M1227.8 244.9H1230.3M1230.3 249.4H1232.8M1235.3 247.6V274.6M1232.8 249.4H1235.3M1235.3 272.8H1237.8M1240.3 265.6V281.8M1237.8 272.8H1240.3M1240.3 278.2H1242.8M1245.3 278.2V298.0M1242.8 278.2H1245.3M1245.3 288.1H1247.8M1250.3 275.5V293.5M1247.8 288.1H1250.3M1250.3 287.2H1252.8M1255.3 278.2V308.8M1252.8 287.2H1255.3M1255.3 289.0H1257.8M1260.3 288.5V315.5M1257.8 289.0H1260.3M1260.3 288.5H1262.8M1265.3 282.2V320.9M1262.8 288.5H1265.3M1265.3 313.7H1267.8M1270.3 308.3V338.9M1267.8 313.7H1270.3M1270.3 320.0H1272.8M1275.3 311.9V338.0M1272.8 320.0H1275.3M1275.3 315.5H1277.8M1280.3 315.5V345.2M1277.8 315.5H1280.3M1280.3 332.6H1282.8M1285.3 330.8V356.9M1282.8 332.6H1285.3M1285.3 338.0H1287.8M1290.3 338.0V379.4M1287.8 338.0H1290.3M1290.3 368.6H1292.8M1295.3 362.3V388.4M1292.8 368.6H1295.3M1295.3 378.5H1297.8M1300.3 356.0V384.8M1297.8 378.5H1300.3M1300.3 373.1H1302.8M1305.3 368.6V393.8M1302.8 373.1H1305.3M1305.3 388.4H1307.8M1310.3 363.2V388.4M1307.8 388.4H1310.3M1310.3 366.8H1312.8M1315.3 350.6V372.2M1312.8 366.8H1315.3M1315.3 355.1H1317.8M1320.3 350.6V373.1M1317.8 355.1H1320.3M1320.3 371.3H1322.8M1325.3 347.0V371.3M1322.8 371.3H1325.3M1325.3 356.0H1327.8M1330.3 348.8V363.2M1327.8 356.0H1330.3M1330.3 359.6H1332.8M1335.3 357.8V374.0M1332.8 359.6H1335.3M1335.3 358.7H1337.8M1340.3 334.4V354.2M1337.8 358.7H1340.3M1340.3 336.2H1342.8M1345.3 332.6V336.2M1342.8 336.2H1345.3M1345.3 333.5H1347.8M1350.3 331.7V348.8M1347.8 333.5H1350.3M1350.3 348.8H1352.8M1355.3 344.3V357.8M1352.8 348.8H1355.3M1355.3 354.2H1357.8M1360.3 352.4V383.0M1357.8 354.2H1360.3M1360.3 381.2H1362.8M1365.3 368.6V400.1M1362.8 381.2H1365.3M1365.3 374.0H1367.8M1370.3 364.1V388.4M1367.8 374.0H1370.3M1370.3 366.8H1372.8M1375.3 347.0V392.9M1372.8 366.8H1375.3M1375.3 360.5H1377.8M1380.3 394.3V427.5M1377.8 360.5H1380.3M1380.3 427.5H1382.8M1385.3 425.1V507.7M1382.8 427.5H1385.3M1385.3 500.3H1387.8M1390.3 458.4V564.4M1387.8 500.3H1390.3M1390.3 523.7H1392.8M1395.3 454.7V538.5M1392.8 523.7H1395.3M1395.3 496.6H1397.8M1400.3 405.4V554.5M1397.8 496.6H1400.3M1400.3 523.7H1402.8M1405.3 402.9V490.4M1402.8 523.7H1405.3M1405.3 409.1H1407.8M1410.3 428.8V476.9M1407.8 409.1H1410.3M1410.3 455.9H1412.8M1415.3 410.3V434.9M1412.8 455.9H1415.3M1415.3 420.1H1417.8" stroke="#62ad45" stroke-width="1.7" fill="none"/>
<path d="M1420.3 412.7V428.8M1417.8 420.1H1420.3M1420.3 425.1H1422.8" stroke="#d04a3a" stroke-width="1.7" fill="none"/>
<path d="M85.0 370.8H97.4L91.2 383.8Z" fill="none" stroke="#3a46a0" stroke-width="1.5" stroke-linejoin="miter"/>
<path d="M110.2 365.8H122.6L116.4 378.8Z" fill="none" stroke="#3a46a0" stroke-width="1.5" stroke-linejoin="miter"/>
<path d="M83.8 390.0L95.8 402.0M95.8 390.0L83.8 402.0" stroke="#3a46a0" stroke-width="1.2"/>
<path d="M89.5 393.6L101.5 405.6M101.5 393.6L89.5 405.6" stroke="#3a46a0" stroke-width="1.2"/>
<path d="M103.2 389.3L115.2 401.3M115.2 389.3L103.2 401.3" stroke="#3a46a0" stroke-width="1.2"/>
<path d="M114.0 392.9L126.0 404.9M126.0 392.9L114.0 404.9" stroke="#3a46a0" stroke-width="1.2"/>
<path d="M86.5 412.5L93.5 426.0H79.5Z" fill="#3a46a0"/>
<path d="M106.7 418.8L113.7 432.3H99.7Z" fill="#3a46a0"/>
<path d="M200.3 412.0H212.7L206.5 425.0Z" fill="none" stroke="#3a46a0" stroke-width="1.5" stroke-linejoin="miter"/>
<path d="M215.5 408.2H227.9L221.7 421.2Z" fill="none" stroke="#3a46a0" stroke-width="1.5" stroke-linejoin="miter"/>
<path d="M280.5 365.7H292.9L286.7 378.7Z" fill="none" stroke="#3a46a0" stroke-width="1.5" stroke-linejoin="miter"/>
<path d="M198.3 445.5L210.3 457.5M210.3 445.5L198.3 457.5" stroke="#3a46a0" stroke-width="1.2"/>
<path d="M203.7 430.0L215.7 442.0M215.7 430.0L203.7 442.0" stroke="#3a46a0" stroke-width="1.2"/>
<path d="M210.0 427.5L222.0 439.5M222.0 427.5L210.0 439.5" stroke="#3a46a0" stroke-width="1.2"/>
<path d="M219.0 450.0L231.0 462.0M231.0 450.0L219.0 462.0" stroke="#3a46a0" stroke-width="1.2"/>
<path d="M229.0 435.6L241.0 447.6M241.0 435.6L229.0 447.6" stroke="#3a46a0" stroke-width="1.2"/>
<path d="M283.8 385.2L295.8 397.2M295.8 385.2L283.8 397.2" stroke="#3a46a0" stroke-width="1.2"/>
<path d="M201.8 465.0L208.8 478.5H194.8Z" fill="#3a46a0"/>
<path d="M211.7 457.8L218.7 471.3H204.7Z" fill="#3a46a0"/>
<path d="M231.3 472.5L238.3 486.0H224.3Z" fill="#3a46a0"/>
<path d="M392.5 320.5H404.9L398.7 333.5Z" fill="none" stroke="#3a46a0" stroke-width="1.5" stroke-linejoin="miter"/>
<path d="M375.3 339.4H387.7L381.5 352.4Z" fill="none" stroke="#3a46a0" stroke-width="1.5" stroke-linejoin="miter"/>
<path d="M449.8 306.8H462.2L456.0 319.8Z" fill="none" stroke="#3a46a0" stroke-width="1.5" stroke-linejoin="miter"/>
<path d="M459.8 292.8H472.2L466.0 305.8Z" fill="none" stroke="#3a46a0" stroke-width="1.5" stroke-linejoin="miter"/>
<path d="M480.4 290.8H492.8L486.6 303.8Z" fill="none" stroke="#3a46a0" stroke-width="1.5" stroke-linejoin="miter"/>
<path d="M363.6 372.0L375.6 384.0M375.6 372.0L363.6 384.0" stroke="#3a46a0" stroke-width="1.2"/>
<path d="M378.9 359.4L390.9 371.4M390.9 359.4L378.9 371.4" stroke="#3a46a0" stroke-width="1.2"/>
<path d="M384.3 347.7L396.3 359.7M396.3 347.7L384.3 359.7" stroke="#3a46a0" stroke-width="1.2"/>
<path d="M394.2 349.5L406.2 361.5M406.2 349.5L394.2 361.5" stroke="#3a46a0" stroke-width="1.2"/>
<path d="M448.2 328.8L460.2 340.8M460.2 328.8L448.2 340.8" stroke="#3a46a0" stroke-width="1.2"/>
<path d="M452.7 331.5L464.7 343.5M464.7 331.5L452.7 343.5" stroke="#3a46a0" stroke-width="1.2"/>
<path d="M458.1 318.0L470.1 330.0M470.1 318.0L458.1 330.0" stroke="#3a46a0" stroke-width="1.2"/>
<path d="M462.6 328.0L474.6 340.0M474.6 328.0L462.6 340.0" stroke="#3a46a0" stroke-width="1.2"/>
<path d="M473.4 315.3L485.4 327.3M485.4 315.3L473.4 327.3" stroke="#3a46a0" stroke-width="1.2"/>
<path d="M484.2 326.1L496.2 338.1M496.2 326.1L484.2 338.1" stroke="#3a46a0" stroke-width="1.2"/>
<path d="M366.4 403.9L373.4 417.4H359.4Z" fill="#3a46a0"/>
<path d="M386.9 382.5L393.9 396.0H379.9Z" fill="#3a46a0"/>
<path d="M451.4 354.0L458.4 367.5H444.4Z" fill="#3a46a0"/>
<path d="M461.4 349.8L468.4 363.3H454.4Z" fill="#3a46a0"/>
<path d="M475.4 341.5L482.4 355.0H468.4Z" fill="#3a46a0"/>
<path d="M540.5 348.1H552.9L546.7 361.1Z" fill="none" stroke="#3a46a0" stroke-width="1.5" stroke-linejoin="miter"/>
<path d="M605.4 305.5H617.8L611.6 318.5Z" fill="none" stroke="#3a46a0" stroke-width="1.5" stroke-linejoin="miter"/>
<path d="M625.3 306.8H637.7L631.5 319.8Z" fill="none" stroke="#3a46a0" stroke-width="1.5" stroke-linejoin="miter"/>
<path d="M539.7 369.4L551.7 381.4M551.7 369.4L539.7 381.4" stroke="#3a46a0" stroke-width="1.2"/>
<path d="M544.2 400.0L556.2 412.0M556.2 400.0L544.2 412.0" stroke="#3a46a0" stroke-width="1.2"/>
<path d="M568.5 392.8L580.5 404.8M580.5 392.8L568.5 404.8" stroke="#3a46a0" stroke-width="1.2"/>
<path d="M608.1 327.1L620.1 339.1M620.1 327.1L608.1 339.1" stroke="#3a46a0" stroke-width="1.2"/>
<path d="M618.0 324.4L630.0 336.4M630.0 324.4L618.0 336.4" stroke="#3a46a0" stroke-width="1.2"/>
<path d="M623.4 325.3L635.4 337.3M635.4 325.3L623.4 337.3" stroke="#3a46a0" stroke-width="1.2"/>
<path d="M629.7 326.2L641.7 338.2M641.7 326.2L629.7 338.2" stroke="#3a46a0" stroke-width="1.2"/>
<path d="M541.3 392.2L548.3 405.7H534.3Z" fill="#3a46a0"/>
<path d="M570.0 422.5L577.0 436.0H563.0Z" fill="#3a46a0"/>
<path d="M621.3 357.5L628.3 371.0H614.3Z" fill="#3a46a0"/>
<path d="M700.5 295.8H712.9L706.7 308.8Z" fill="none" stroke="#3a46a0" stroke-width="1.5" stroke-linejoin="miter"/>
<path d="M715.3 289.3H727.7L721.5 302.3Z" fill="none" stroke="#3a46a0" stroke-width="1.5" stroke-linejoin="miter"/>
<path d="M725.2 285.8H737.6L731.4 298.8Z" fill="none" stroke="#3a46a0" stroke-width="1.5" stroke-linejoin="miter"/>
<path d="M688.8 331.9L700.8 343.9M700.8 331.9L688.8 343.9" stroke="#3a46a0" stroke-width="1.2"/>
<path d="M705.0 330.8L717.0 342.8M717.0 330.8L705.0 342.8" stroke="#3a46a0" stroke-width="1.2"/>
<path d="M709.5 310.6L721.5 322.6M721.5 310.6L709.5 322.6" stroke="#3a46a0" stroke-width="1.2"/>
<path d="M714.9 309.7L726.9 321.7M726.9 309.7L714.9 321.7" stroke="#3a46a0" stroke-width="1.2"/>
<path d="M723.0 308.8L735.0 320.8M735.0 308.8L723.0 320.8" stroke="#3a46a0" stroke-width="1.2"/>
<path d="M728.4 308.8L740.4 320.8M740.4 308.8L728.4 320.8" stroke="#3a46a0" stroke-width="1.2"/>
<path d="M788.7 292.6L800.7 304.6M800.7 292.6L788.7 304.6" stroke="#3a46a0" stroke-width="1.2"/>
<path d="M795.0 290.0L807.0 302.0M807.0 290.0L795.0 302.0" stroke="#3a46a0" stroke-width="1.2"/>
<path d="M691.3 357.5L698.3 371.0H684.3Z" fill="#3a46a0"/>
<path d="M711.0 349.7L718.0 363.2H704.0Z" fill="#3a46a0"/>
<path d="M726.6 335.0L733.6 348.5H719.6Z" fill="#3a46a0"/>
<path d="M791.6 320.0L798.6 333.5H784.6Z" fill="#3a46a0"/>
<path d="M795.4 259.1H807.8L801.6 272.1Z" fill="none" stroke="#3a46a0" stroke-width="1.5" stroke-linejoin="miter"/>
<path d="M815.4 259.1H827.8L821.6 272.1Z" fill="none" stroke="#3a46a0" stroke-width="1.5" stroke-linejoin="miter"/>
<path d="M895.4 230.8H907.8L901.6 243.8Z" fill="none" stroke="#3a46a0" stroke-width="1.5" stroke-linejoin="miter"/>
<path d="M798.3 291.2L810.3 303.2M810.3 291.2L798.3 303.2" stroke="#3a46a0" stroke-width="1.2"/>
<path d="M807.3 282.2L819.3 294.2M819.3 282.2L807.3 294.2" stroke="#3a46a0" stroke-width="1.2"/>
<path d="M812.7 282.2L824.7 294.2M824.7 282.2L812.7 294.2" stroke="#3a46a0" stroke-width="1.2"/>
<path d="M819.0 280.4L831.0 292.4M831.0 280.4L819.0 292.4" stroke="#3a46a0" stroke-width="1.2"/>
<path d="M883.8 256.1L895.8 268.1M895.8 256.1L883.8 268.1" stroke="#3a46a0" stroke-width="1.2"/>
<path d="M900.0 255.2L912.0 267.2M912.0 255.2L900.0 267.2" stroke="#3a46a0" stroke-width="1.2"/>
<path d="M811.4 307.5L818.4 321.0H804.4Z" fill="#3a46a0"/>
<path d="M886.4 289.0L893.4 302.5H879.4Z" fill="#3a46a0"/>
<path d="M963.9 223.0H976.3L970.1 236.0Z" fill="none" stroke="#3a46a0" stroke-width="1.5" stroke-linejoin="miter"/>
<path d="M980.5 212.8H992.9L986.7 225.8Z" fill="none" stroke="#3a46a0" stroke-width="1.5" stroke-linejoin="miter"/>
<path d="M1050.6 233.3H1063.0L1056.8 246.3Z" fill="none" stroke="#3a46a0" stroke-width="1.5" stroke-linejoin="miter"/>
<path d="M1080.4 244.6H1092.8L1086.6 257.6Z" fill="none" stroke="#3a46a0" stroke-width="1.5" stroke-linejoin="miter"/>
<path d="M961.8 242.5L973.8 254.5M973.8 242.5L961.8 254.5" stroke="#3a46a0" stroke-width="1.2"/>
<path d="M967.2 245.2L979.2 257.2M979.2 245.2L967.2 257.2" stroke="#3a46a0" stroke-width="1.2"/>
<path d="M973.5 236.2L985.5 248.2M985.5 236.2L973.5 248.2" stroke="#3a46a0" stroke-width="1.2"/>
<path d="M979.8 233.5L991.8 245.5M991.8 233.5L979.8 245.5" stroke="#3a46a0" stroke-width="1.2"/>
<path d="M985.2 236.2L997.2 248.2M997.2 236.2L985.2 248.2" stroke="#3a46a0" stroke-width="1.2"/>
<path d="M1049.1 252.4L1061.1 264.4M1061.1 252.4L1049.1 264.4" stroke="#3a46a0" stroke-width="1.2"/>
<path d="M1055.1 267.7L1067.1 279.7M1067.1 267.7L1055.1 279.7" stroke="#3a46a0" stroke-width="1.2"/>
<path d="M1079.7 267.7L1091.7 279.7M1091.7 267.7L1079.7 279.7" stroke="#3a46a0" stroke-width="1.2"/>
<path d="M1084.2 284.8L1096.2 296.8M1096.2 284.8L1084.2 296.8" stroke="#3a46a0" stroke-width="1.2"/>
<path d="M966.3 269.0L973.3 282.5H959.3Z" fill="#3a46a0"/>
<path d="M976.4 262.7L983.4 276.2H969.4Z" fill="#3a46a0"/>
<path d="M1051.2 279.8L1058.2 293.3H1044.2Z" fill="#3a46a0"/>
<path d="M1081.3 299.0L1088.3 312.5H1074.3Z" fill="#3a46a0"/>
<path d="M1140.4 230.6H1152.8L1146.6 243.6Z" fill="none" stroke="#3a46a0" stroke-width="1.5" stroke-linejoin="miter"/>
<path d="M1155.2 228.4H1167.6L1161.4 241.4Z" fill="none" stroke="#3a46a0" stroke-width="1.5" stroke-linejoin="miter"/>
<path d="M1225.3 218.3H1237.7L1231.5 231.3Z" fill="none" stroke="#3a46a0" stroke-width="1.5" stroke-linejoin="miter"/>
<path d="M1108.2 277.6L1120.2 289.6M1120.2 277.6L1108.2 289.6" stroke="#3a46a0" stroke-width="1.2"/>
<path d="M1144.2 262.3L1156.2 274.3M1156.2 262.3L1144.2 274.3" stroke="#3a46a0" stroke-width="1.2"/>
<path d="M1154.1 259.6L1166.1 271.6M1166.1 259.6L1154.1 271.6" stroke="#3a46a0" stroke-width="1.2"/>
<path d="M1159.5 249.7L1171.5 261.7M1171.5 249.7L1159.5 261.7" stroke="#3a46a0" stroke-width="1.2"/>
<path d="M1218.0 240.7L1230.0 252.7M1230.0 240.7L1218.0 252.7" stroke="#3a46a0" stroke-width="1.2"/>
<path d="M1229.7 244.3L1241.7 256.3M1241.7 244.3L1229.7 256.3" stroke="#3a46a0" stroke-width="1.2"/>
<path d="M1111.0 323.0L1118.0 336.5H1104.0Z" fill="#3a46a0"/>
<path d="M1156.6 284.0L1163.6 297.5H1149.6Z" fill="#3a46a0"/>
<path d="M1221.6 266.5L1228.6 280.0H1214.6Z" fill="#3a46a0"/>
<path d="M1345.0 305.8H1357.4L1351.2 318.8Z" fill="none" stroke="#3a46a0" stroke-width="1.5" stroke-linejoin="miter"/>
<path d="M1314.0 349.1L1326.0 361.1M1326.0 349.1L1314.0 361.1" stroke="#3a46a0" stroke-width="1.2"/>
<path d="M1349.1 347.3L1361.1 359.3M1361.1 347.3L1349.1 359.3" stroke="#3a46a0" stroke-width="1.2"/>
<path d="M1316.8 387.5L1323.8 401.0H1309.8Z" fill="#3a46a0"/>
<rect x="31.5" y="619.5" width="1398.0" height="56.0" fill="none" stroke="#e0e0e0" stroke-width="1"/>
<line x1="31.5" y1="626.5" x2="1429.5" y2="626.5" stroke="#e3e3e3" stroke-dasharray="4 3.5"/>
<line x1="112.5" y1="619.5" x2="112.5" y2="675.5" stroke="#e3e3e3" stroke-dasharray="4 3.5"/>
<line x1="222.5" y1="619.5" x2="222.5" y2="675.5" stroke="#e3e3e3" stroke-dasharray="4 3.5"/>
<line x1="332.5" y1="619.5" x2="332.5" y2="675.5" stroke="#e3e3e3" stroke-dasharray="4 3.5"/>
<line x1="427.5" y1="619.5" x2="427.5" y2="675.5" stroke="#e3e3e3" stroke-dasharray="4 3.5"/>
<line x1="537.5" y1="619.5" x2="537.5" y2="675.5" stroke="#e3e3e3" stroke-dasharray="4 3.5"/>
<line x1="647.5" y1="619.5" x2="647.5" y2="675.5" stroke="#e3e3e3" stroke-dasharray="4 3.5"/>
<line x1="747.5" y1="619.5" x2="747.5" y2="675.5" stroke="#e3e3e3" stroke-dasharray="4 3.5"/>
<line x1="862.5" y1="619.5" x2="862.5" y2="675.5" stroke="#e3e3e3" stroke-dasharray="4 3.5"/>
<line x1="962.5" y1="619.5" x2="962.5" y2="675.5" stroke="#e3e3e3" stroke-dasharray="4 3.5"/>
<line x1="1067.5" y1="619.5" x2="1067.5" y2="675.5" stroke="#e3e3e3" stroke-dasharray="4 3.5"/>
<line x1="1167.5" y1="619.5" x2="1167.5" y2="675.5" stroke="#e3e3e3" stroke-dasharray="4 3.5"/>
<line x1="1262.5" y1="619.5" x2="1262.5" y2="675.5" stroke="#e3e3e3" stroke-dasharray="4 3.5"/>
<line x1="1367.5" y1="619.5" x2="1367.5" y2="675.5" stroke="#e3e3e3" stroke-dasharray="4 3.5"/>
<line x1="1420.5" y1="619.5" x2="1420.5" y2="675.5" stroke="#e3e3e3" stroke-dasharray="4 3.5"/>
<line x1="1429.5" y1="676.5" x2="1436.5" y2="676.5" stroke="#e0e0e0"/>
<line x1="1429.5" y1="672.5" x2="1436.5" y2="672.5" stroke="#e0e0e0"/>
<line x1="1429.5" y1="669.5" x2="1436.5" y2="669.5" stroke="#e0e0e0"/>
<line x1="1429.5" y1="666.5" x2="1436.5" y2="666.5" stroke="#e0e0e0"/>
<line x1="1429.5" y1="663.5" x2="1436.5" y2="663.5" stroke="#e0e0e0"/>
<line x1="1429.5" y1="660.5" x2="1436.5" y2="660.5" stroke="#e0e0e0"/>
<line x1="1429.5" y1="657.5" x2="1436.5" y2="657.5" stroke="#e0e0e0"/>
<line x1="1429.5" y1="654.5" x2="1436.5" y2="654.5" stroke="#e0e0e0"/>
<line x1="1429.5" y1="651.5" x2="1436.5" y2="651.5" stroke="#e0e0e0"/>
<line x1="1429.5" y1="648.5" x2="1436.5" y2="648.5" stroke="#e0e0e0"/>
<line x1="1429.5" y1="644.5" x2="1436.5" y2="644.5" stroke="#e0e0e0"/>
<line x1="1429.5" y1="641.5" x2="1436.5" y2="641.5" stroke="#e0e0e0"/>
<line x1="1429.5" y1="638.5" x2="1436.5" y2="638.5" stroke="#e0e0e0"/>
<line x1="1429.5" y1="635.5" x2="1436.5" y2="635.5" stroke="#e0e0e0"/>
<line x1="1429.5" y1="632.5" x2="1436.5" y2="632.5" stroke="#e0e0e0"/>
<line x1="1429.5" y1="629.5" x2="1436.5" y2="629.5" stroke="#e0e0e0"/>
<line x1="1429.5" y1="626.5" x2="1436.5" y2="626.5" stroke="#e0e0e0"/>
<path d="M39.4 675.5L39.4 633.9L112.7 633.9L116.0 635.0L198.7 635.0L205.4 633.3L212.2 632.2L218.9 634.3L224.0 635.0L232.4 633.9L239.2 632.2L252.7 631.2L266.2 629.5L272.9 628.2L367.4 628.2L374.1 626.5L392.7 626.5L397.7 627.5L451.7 627.2L456.8 626.2L461.8 626.8L466.9 628.2L475.3 627.9L483.8 628.9L488.8 630.2L520.0 629.9L540.2 629.9L550.4 632.9L574.0 632.9L587.5 628.2L601.0 624.8L607.7 624.5L789.9 624.5L795.0 623.8L800.0 624.5L886.0 624.5L891.1 623.8L897.9 624.5L1050.5 624.5L1053.4 625.4L1083.1 626.3L1086.1 627.4L1118.8 627.4L1124.7 625.7L1133.6 624.2L1139.5 624.5L1145.5 626.3L1160.3 625.7L1163.3 624.8L1225.7 624.8L1228.6 625.7L1317.7 625.7L1320.7 626.8L1323.6 625.7L1335.5 624.5L1342.9 622.7L1348.9 623.9L1353.3 624.5L1415.7 624.5L1415.7 675.5Z" fill="#85bb50"/>
<rect x="31.5" y="701.5" width="1398.0" height="179.0" fill="none" stroke="#e0e0e0" stroke-width="1"/>
<line x1="31.5" y1="716.5" x2="1429.5" y2="716.5" stroke="#e3e3e3" stroke-dasharray="4 3.5"/>
<line x1="31.5" y1="751.5" x2="1429.5" y2="751.5" stroke="#e3e3e3" stroke-dasharray="4 3.5"/>
<line x1="31.5" y1="785.5" x2="1429.5" y2="785.5" stroke="#e3e3e3" stroke-dasharray="4 3.5"/>
<line x1="31.5" y1="819.5" x2="1429.5" y2="819.5" stroke="#e3e3e3" stroke-dasharray="4 3.5"/>
<line x1="31.5" y1="854.5" x2="1429.5" y2="854.5" stroke="#e3e3e3" stroke-dasharray="4 3.5"/>
<line x1="112.5" y1="701.5" x2="112.5" y2="880.5" stroke="#e3e3e3" stroke-dasharray="4 3.5"/>
<line x1="222.5" y1="701.5" x2="222.5" y2="880.5" stroke="#e3e3e3" stroke-dasharray="4 3.5"/>
<line x1="332.5" y1="701.5" x2="332.5" y2="880.5" stroke="#e3e3e3" stroke-dasharray="4 3.5"/>
<line x1="427.5" y1="701.5" x2="427.5" y2="880.5" stroke="#e3e3e3" stroke-dasharray="4 3.5"/>
<line x1="537.5" y1="701.5" x2="537.5" y2="880.5" stroke="#e3e3e3" stroke-dasharray="4 3.5"/>
<line x1="647.5" y1="701.5" x2="647.5" y2="880.5" stroke="#e3e3e3" stroke-dasharray="4 3.5"/>
<line x1="747.5" y1="701.5" x2="747.5" y2="880.5" stroke="#e3e3e3" stroke-dasharray="4 3.5"/>
<line x1="862.5" y1="701.5" x2="862.5" y2="880.5" stroke="#e3e3e3" stroke-dasharray="4 3.5"/>
<line x1="962.5" y1="701.5" x2="962.5" y2="880.5" stroke="#e3e3e3" stroke-dasharray="4 3.5"/>
<line x1="1067.5" y1="701.5" x2="1067.5" y2="880.5" stroke="#e3e3e3" stroke-dasharray="4 3.5"/>
<line x1="1167.5" y1="701.5" x2="1167.5" y2="880.5" stroke="#e3e3e3" stroke-dasharray="4 3.5"/>
<line x1="1262.5" y1="701.5" x2="1262.5" y2="880.5" stroke="#e3e3e3" stroke-dasharray="4 3.5"/>
<line x1="1367.5" y1="701.5" x2="1367.5" y2="880.5" stroke="#e3e3e3" stroke-dasharray="4 3.5"/>
<line x1="1420.5" y1="701.5" x2="1420.5" y2="880.5" stroke="#e3e3e3" stroke-dasharray="4 3.5"/>
<line x1="1429.5" y1="871.5" x2="1436.5" y2="871.5" stroke="#e0e0e0"/>
<line x1="1429.5" y1="854.5" x2="1436.5" y2="854.5" stroke="#e0e0e0"/>
<line x1="1429.5" y1="837.5" x2="1436.5" y2="837.5" stroke="#e0e0e0"/>
<line x1="1429.5" y1="819.5" x2="1436.5" y2="819.5" stroke="#e0e0e0"/>
<line x1="1429.5" y1="802.5" x2="1436.5" y2="802.5" stroke="#e0e0e0"/>
<line x1="1429.5" y1="785.5" x2="1436.5" y2="785.5" stroke="#e0e0e0"/>
<line x1="1429.5" y1="768.5" x2="1436.5" y2="768.5" stroke="#e0e0e0"/>
<line x1="1429.5" y1="751.5" x2="1436.5" y2="751.5" stroke="#e0e0e0"/>
<line x1="1429.5" y1="733.5" x2="1436.5" y2="733.5" stroke="#e0e0e0"/>
<line x1="1429.5" y1="716.5" x2="1436.5" y2="716.5" stroke="#e0e0e0"/>
<line x1="1429.5" y1="699.5" x2="1436.5" y2="699.5" stroke="#e0e0e0"/>
<path d="M39.4 785.0C40.2 785.2 42.2 785.7 44.2 786.2C46.1 786.7 49.3 787.8 51.3 788.1C53.2 788.4 54.4 788.3 56.0 788.1C57.6 787.9 59.1 786.7 60.7 786.7C62.3 786.6 63.9 787.3 65.4 787.9C67.0 788.5 68.4 789.6 70.2 790.2C71.9 790.9 74.3 791.8 76.1 791.6C77.8 791.5 79.0 790.4 80.8 789.3C82.6 788.2 84.3 786.2 86.7 785.0C89.0 783.8 92.2 782.5 95.0 782.0C97.7 781.4 100.3 781.8 103.2 782.0C106.2 782.2 110.3 782.8 112.7 783.1C115.0 783.5 115.4 783.1 117.4 783.8C119.4 784.6 122.1 786.1 124.5 787.9C126.8 789.6 129.6 792.8 131.6 794.5C133.5 796.2 134.3 796.9 136.3 798.0C138.3 799.1 140.6 800.5 143.4 801.1C146.1 801.7 149.9 801.4 152.8 801.6C155.8 801.7 158.7 801.4 161.1 801.8C163.4 802.2 164.8 802.8 167.0 803.9C169.2 805.1 171.7 807.1 174.1 808.6C176.4 810.2 178.8 812.2 181.2 813.4C183.5 814.5 186.3 815.7 188.2 815.7C190.2 815.7 191.0 815.3 193.0 813.4C194.9 811.4 197.7 807.5 200.1 803.9C202.4 800.4 204.8 796.8 207.1 792.1C209.5 787.4 211.9 780.0 214.2 775.6C216.6 771.2 219.3 767.5 221.3 765.7C223.3 763.8 224.1 764.6 226.0 764.2C228.0 763.8 230.8 764.0 233.1 763.3C235.5 762.6 237.8 761.5 240.2 760.2C242.6 758.9 244.9 756.9 247.3 755.5C249.7 754.1 252.0 752.6 254.4 752.0C256.7 751.4 259.1 751.6 261.5 752.0C263.8 752.3 265.8 752.7 268.5 753.8C271.3 755.0 275.2 757.0 278.0 758.6C280.7 760.1 282.7 761.6 285.1 763.3C287.4 765.0 289.8 766.5 292.2 768.5C294.5 770.5 296.9 772.4 299.2 775.1C301.6 777.9 304.0 781.8 306.3 785.0C308.7 788.3 311.1 791.6 313.4 794.5C315.8 797.3 318.1 799.7 320.5 802.0C322.9 804.4 325.0 806.8 327.6 808.6C330.1 810.5 332.9 812.8 335.9 812.9C338.8 813.0 342.4 811.4 345.3 809.1C348.3 806.8 351.0 802.2 353.6 799.2C356.1 796.2 357.9 793.9 360.7 790.9C363.4 788.0 366.9 784.2 370.1 781.5C373.3 778.7 377.3 776.2 380.0 774.4C382.8 772.6 384.1 771.8 386.5 770.9C389.0 769.9 392.2 768.5 394.8 768.5C397.4 768.5 399.3 769.3 401.9 770.9C404.4 772.4 407.2 775.4 410.2 777.9C413.1 780.5 416.4 783.6 419.6 786.2C422.7 788.8 426.1 791.5 429.0 793.3C432.0 795.1 434.6 796.7 437.3 796.8C440.1 797.0 442.6 795.4 445.6 794.0C448.5 792.6 451.9 790.5 455.0 788.6C458.2 786.7 461.7 784.2 464.5 782.7C467.2 781.2 468.8 780.3 471.6 779.6C474.3 778.9 478.3 778.1 481.0 778.4C483.8 778.7 485.3 779.2 488.1 781.5C490.8 783.8 494.4 788.4 497.5 792.1C500.7 795.9 504.2 800.2 507.0 803.9C509.7 807.7 511.9 811.5 514.1 814.5C516.2 817.6 518.0 820.8 520.0 822.3C521.9 823.9 523.7 824.4 525.9 824.0C528.0 823.6 530.6 822.1 533.0 820.0C535.3 817.9 537.9 813.6 540.1 811.5C542.2 809.3 543.6 807.1 546.0 807.0C548.3 806.9 551.7 809.5 554.2 811.0C556.8 812.5 559.1 815.1 561.3 815.7C563.5 816.3 565.2 816.5 567.2 814.5C569.2 812.6 571.0 808.4 573.1 803.9C575.3 799.4 577.8 794.1 580.2 787.4C582.6 780.7 584.9 771.6 587.3 763.8C589.7 755.9 592.0 746.6 594.4 740.2C596.7 733.7 598.7 728.8 601.5 724.8C604.2 720.8 608.2 716.8 610.9 716.1C613.7 715.3 615.6 717.2 618.0 720.1C620.4 722.9 622.3 727.8 625.1 733.1C627.8 738.4 631.4 744.9 634.5 752.0C637.7 759.0 640.8 768.1 644.0 775.6C647.1 783.1 650.3 789.7 653.4 796.8C656.6 803.9 660.1 812.2 662.9 818.1C665.6 824.0 667.8 829.2 670.0 832.3C672.1 835.3 673.9 836.3 675.9 836.5C677.8 836.7 679.6 836.5 681.8 833.4C683.9 830.4 686.5 823.4 688.8 818.1C691.2 812.8 693.6 807.5 695.9 801.6C698.3 795.7 700.7 787.8 703.0 782.7C705.4 777.5 708.8 773.0 710.0 770.9C711.2 768.7 708.9 771.4 710.1 769.7C711.3 767.9 715.4 762.0 717.1 760.2C718.7 758.5 718.6 759.8 720.0 759.0C721.4 758.3 723.1 755.5 725.4 755.5C727.6 755.5 730.7 757.3 733.6 759.0C736.6 760.8 740.3 763.6 743.1 766.1C745.8 768.7 747.8 771.2 750.2 774.4C752.5 777.5 754.5 781.3 757.2 785.0C760.0 788.8 763.3 794.0 766.7 796.8C770.0 799.7 774.2 801.7 777.3 802.0C780.5 802.3 782.6 800.6 785.6 798.7C788.5 796.9 791.9 793.5 795.0 790.9C798.2 788.3 801.3 785.1 804.5 783.1C807.6 781.2 810.8 779.7 813.9 779.1C817.1 778.5 820.2 778.6 823.4 779.6C826.5 780.6 829.7 782.5 832.8 785.0C836.0 787.5 839.1 792.1 842.3 794.5C845.4 796.8 849.0 798.2 851.7 799.2C854.5 800.2 856.4 799.2 858.8 800.4C861.2 801.6 863.3 804.6 865.9 806.3C868.4 808.0 871.8 810.9 874.1 810.5C876.5 810.1 877.9 808.2 880.1 803.9C882.2 799.7 884.8 791.3 887.1 785.0C889.5 778.7 892.1 771.2 894.2 766.1C896.4 761.0 898.0 757.2 900.1 754.3C902.3 751.5 905.0 749.3 907.2 749.1C909.4 748.9 911.0 749.9 913.1 753.1C915.3 756.4 917.8 763.4 920.2 768.5C922.6 773.6 924.9 779.7 927.3 783.8C929.7 788.0 931.6 791.1 934.4 793.3C937.1 795.5 940.7 796.8 943.8 796.8C947.0 796.8 950.1 794.7 953.3 793.3C956.4 791.9 959.6 790.3 962.7 788.6C965.9 786.8 969.0 784.2 972.2 782.7C975.3 781.1 978.5 779.7 981.6 779.1C984.8 778.5 987.5 777.7 991.1 779.1C994.6 780.5 999.3 785.1 1002.9 787.4C1006.4 789.6 1009.2 790.8 1012.3 792.6C1015.5 794.4 1019.0 795.7 1021.8 798.0C1024.5 800.3 1026.5 803.1 1028.8 806.3C1031.2 809.4 1034.0 814.6 1035.9 816.9C1037.9 819.2 1038.7 820.4 1040.7 820.0C1042.6 819.6 1045.4 817.4 1047.7 814.5C1050.1 811.7 1052.8 805.7 1054.8 802.7C1056.9 799.8 1058.9 798.0 1060.0 796.8C1061.1 795.7 1060.2 795.9 1061.5 795.6C1062.9 795.4 1065.6 795.5 1067.9 795.4C1070.3 795.3 1073.1 796.0 1075.6 794.9C1078.2 793.7 1080.8 790.3 1083.3 788.5C1085.9 786.7 1088.5 784.7 1091.0 784.1C1093.6 783.5 1095.7 784.2 1098.7 784.6C1101.7 785.0 1105.6 788.2 1109.0 786.7C1112.4 785.2 1115.8 780.5 1119.2 775.6C1122.6 770.8 1126.1 763.0 1129.5 757.7C1132.9 752.4 1136.8 745.9 1139.7 743.6C1142.7 741.2 1144.9 742.3 1147.4 743.6C1150.0 744.9 1152.1 747.0 1155.1 751.3C1158.1 755.6 1162.0 763.0 1165.4 769.2C1168.8 775.4 1172.6 783.8 1175.6 788.5C1178.6 793.2 1180.3 795.3 1183.3 797.4C1186.3 799.6 1190.2 800.8 1193.6 801.3C1197.0 801.8 1200.4 801.6 1203.8 800.5C1207.3 799.4 1210.7 797.1 1214.1 794.9C1217.5 792.6 1221.4 789.2 1224.4 787.2C1227.4 785.1 1229.5 783.0 1232.1 782.6C1234.6 782.1 1236.8 781.5 1239.7 784.6C1242.7 787.7 1246.6 796.2 1250.0 801.3C1253.4 806.4 1256.4 811.6 1260.3 815.4C1264.1 819.1 1269.7 822.6 1273.1 823.8C1276.5 825.0 1277.8 823.1 1280.8 822.6C1283.8 822.0 1287.2 820.8 1291.0 820.5C1294.9 820.3 1300.4 822.3 1303.8 821.0C1307.3 819.7 1308.5 818.0 1311.5 812.8C1314.5 807.6 1318.4 798.3 1321.8 789.7C1325.2 781.2 1328.6 769.2 1332.1 761.5C1335.5 753.8 1338.7 749.0 1342.3 743.6C1345.9 738.2 1350.9 730.9 1353.8 729.0C1356.8 727.1 1357.9 728.8 1360.3 732.1C1362.6 735.3 1364.7 741.5 1367.9 748.7C1371.2 756.0 1376.7 767.5 1379.5 775.6C1382.3 783.8 1383.1 790.0 1384.6 797.4C1386.1 804.9 1387.0 812.0 1388.5 820.5C1390.0 829.1 1391.7 840.7 1393.6 848.7C1395.5 856.8 1397.9 867.4 1400.0 868.7C1402.1 870.0 1403.8 863.6 1406.4 856.4C1409.0 849.2 1413.9 830.8 1415.4 825.6" stroke="#a04aa6" stroke-width="1.4" fill="none" stroke-linejoin="round"/>
<line x1="112.5" y1="880.5" x2="112.5" y2="888.5" stroke="#e3e3e3"/>
<line x1="222.5" y1="880.5" x2="222.5" y2="888.5" stroke="#e3e3e3"/>
<line x1="332.5" y1="880.5" x2="332.5" y2="888.5" stroke="#e3e3e3"/>
<line x1="427.5" y1="880.5" x2="427.5" y2="888.5" stroke="#e3e3e3"/>
<line x1="537.5" y1="880.5" x2="537.5" y2="888.5" stroke="#e3e3e3"/>
<line x1="647.5" y1="880.5" x2="647.5" y2="888.5" stroke="#e3e3e3"/>
<line x1="747.5" y1="880.5" x2="747.5" y2="888.5" stroke="#e3e3e3"/>
<line x1="862.5" y1="880.5" x2="862.5" y2="888.5" stroke="#e3e3e3"/>
<line x1="962.5" y1="880.5" x2="962.5" y2="888.5" stroke="#e3e3e3"/>
<line x1="1067.5" y1="880.5" x2="1067.5" y2="888.5" stroke="#e3e3e3"/>
<line x1="1167.5" y1="880.5" x2="1167.5" y2="888.5" stroke="#e3e3e3"/>
<line x1="1262.5" y1="880.5" x2="1262.5" y2="888.5" stroke="#e3e3e3"/>
<line x1="1367.5" y1="880.5" x2="1367.5" y2="888.5" stroke="#e3e3e3"/>
<line x1="1420.5" y1="880.5" x2="1420.5" y2="888.5" stroke="#e3e3e3"/>
<text x="112.5" y="900" text-anchor="middle" font-size="11.5" fill="#1a1a1a">Apr</text>
<text x="222.5" y="900" text-anchor="middle" font-size="11.5" fill="#1a1a1a">May</text>
<text x="332.5" y="900" text-anchor="middle" font-size="11.5" fill="#1a1a1a">Jun</text>
<text x="427.5" y="900" text-anchor="middle" font-size="11.5" fill="#1a1a1a">Jul</text>
<text x="537.5" y="900" text-anchor="middle" font-size="11.5" fill="#1a1a1a">Aug</text>
<text x="647.5" y="900" text-anchor="middle" font-size="11.5" fill="#1a1a1a">Sep</text>
<text x="747.5" y="900" text-anchor="middle" font-size="11.5" fill="#1a1a1a">Oct</text>
<text x="862.5" y="900" text-anchor="middle" font-size="11.5" fill="#1a1a1a">Nov</text>
<text x="962.5" y="900" text-anchor="middle" font-size="11.5" fill="#1a1a1a">Dec</text>
<text x="1067.5" y="900" text-anchor="middle" font-size="11.5" fill="#1a1a1a">Jan</text>
<text x="1167.5" y="900" text-anchor="middle" font-size="11.5" fill="#1a1a1a">Feb</text>
<text x="1262.5" y="900" text-anchor="middle" font-size="11.5" fill="#1a1a1a">Mar</text>
<text x="1367.5" y="900" text-anchor="middle" font-size="11.5" fill="#1a1a1a">Apr</text>
<text transform="translate(1437 159.6) scale(0.9 1)" font-size="14.5" fill="#1a1a1a" stroke="#1a1a1a" stroke-width="0.2">6600</text>
<text transform="translate(1437 206.1) scale(0.9 1)" font-size="14.5" fill="#1a1a1a" stroke="#1a1a1a" stroke-width="0.2">6400</text>
<text transform="translate(1437 252.6) scale(0.9 1)" font-size="14.5" fill="#1a1a1a" stroke="#1a1a1a" stroke-width="0.2">6200</text>
<text transform="translate(1437 299.1) scale(0.9 1)" font-size="14.5" fill="#1a1a1a" stroke="#1a1a1a" stroke-width="0.2">6000</text>
<text transform="translate(1437 345.6) scale(0.9 1)" font-size="14.5" fill="#1a1a1a" stroke="#1a1a1a" stroke-width="0.2">5800</text>
<text transform="translate(1437 392.1) scale(0.9 1)" font-size="14.5" fill="#1a1a1a" stroke="#1a1a1a" stroke-width="0.2">5600</text>
<text transform="translate(1437 438.6) scale(0.9 1)" font-size="14.5" fill="#1a1a1a" stroke="#1a1a1a" stroke-width="0.2">5400</text>
<text transform="translate(1437 485.1) scale(0.9 1)" font-size="14.5" fill="#1a1a1a" stroke="#1a1a1a" stroke-width="0.2">5200</text>
<text transform="translate(1437 531.6) scale(0.9 1)" font-size="14.5" fill="#1a1a1a" stroke="#1a1a1a" stroke-width="0.2">5000</text>
<text transform="translate(1437 578.1) scale(0.9 1)" font-size="14.5" fill="#1a1a1a" stroke="#1a1a1a" stroke-width="0.2">4800</text>
<text transform="translate(1438 632.0) scale(0.9 1)" font-size="14.5" fill="#1a1a1a" stroke="#1a1a1a" stroke-width="0.2">75000</text>
<text transform="translate(1438 646.6) scale(0.9 1)" font-size="14.5" fill="#1a1a1a" stroke="#1a1a1a" stroke-width="0.2">50000</text>
<text transform="translate(1438 662.8) scale(0.9 1)" font-size="14.5" fill="#1a1a1a" stroke="#1a1a1a" stroke-width="0.2">25000</text>
<text transform="translate(1438 678.9) scale(0.9 1)" font-size="14.5" fill="#1a1a1a" stroke="#1a1a1a" stroke-width="0.2">0</text>
<text transform="translate(1437 721.7) scale(0.9 1)" font-size="14.5" fill="#1a1a1a" stroke="#1a1a1a" stroke-width="0.2">4</text>
<text transform="translate(1437 756.1) scale(0.9 1)" font-size="14.5" fill="#1a1a1a" stroke="#1a1a1a" stroke-width="0.2">2</text>
<text transform="translate(1437 790.5) scale(0.9 1)" font-size="14.5" fill="#1a1a1a" stroke="#1a1a1a" stroke-width="0.2">0</text>
<text transform="translate(1437 824.9) scale(0.9 1)" font-size="14.5" fill="#1a1a1a" stroke="#1a1a1a" stroke-width="0.2">-2</text>
<text transform="translate(1437 859.3) scale(0.9 1)" font-size="14.5" fill="#1a1a1a" stroke="#1a1a1a" stroke-width="0.2">-4</text>
</svg>

<div class="a" style="left:0;top:945px;width:12px;height:24px;background:#a8a8a8"></div><div class="a" id="status" style="border-bottom-left-radius:9px;border-left:1px solid #a8a8a8;box-sizing:border-box"></div>
<div class="a" style="left:0;top:944px;width:1482px;height:1px;background:#e0e0e0"></div>
<div class="t" style="left:5px;top:951px;font-size:14px;letter-spacing:-0.3px">Waiting for price tick(s) ...</div>
<div class="a" style="left:1218px;top:950px;width:170px;height:17px;box-sizing:border-box;border-top:1px solid #a0a0a0;border-left:1px solid #a0a0a0;"></div>
<div class="t" style="left:1327px;top:951px;font-size:14.6px">4/1/2025</div>
<div class="a" style="left:1391px;top:950px;width:91px;height:17px;box-sizing:border-box;border-top:1px solid #a0a0a0;border-left:1px solid #a0a0a0;"></div>
<div class="t" style="left:1420px;top:951px;font-size:13.6px">6,090.509</div>
<div class="a" id="blk"></div>
</body></html>
